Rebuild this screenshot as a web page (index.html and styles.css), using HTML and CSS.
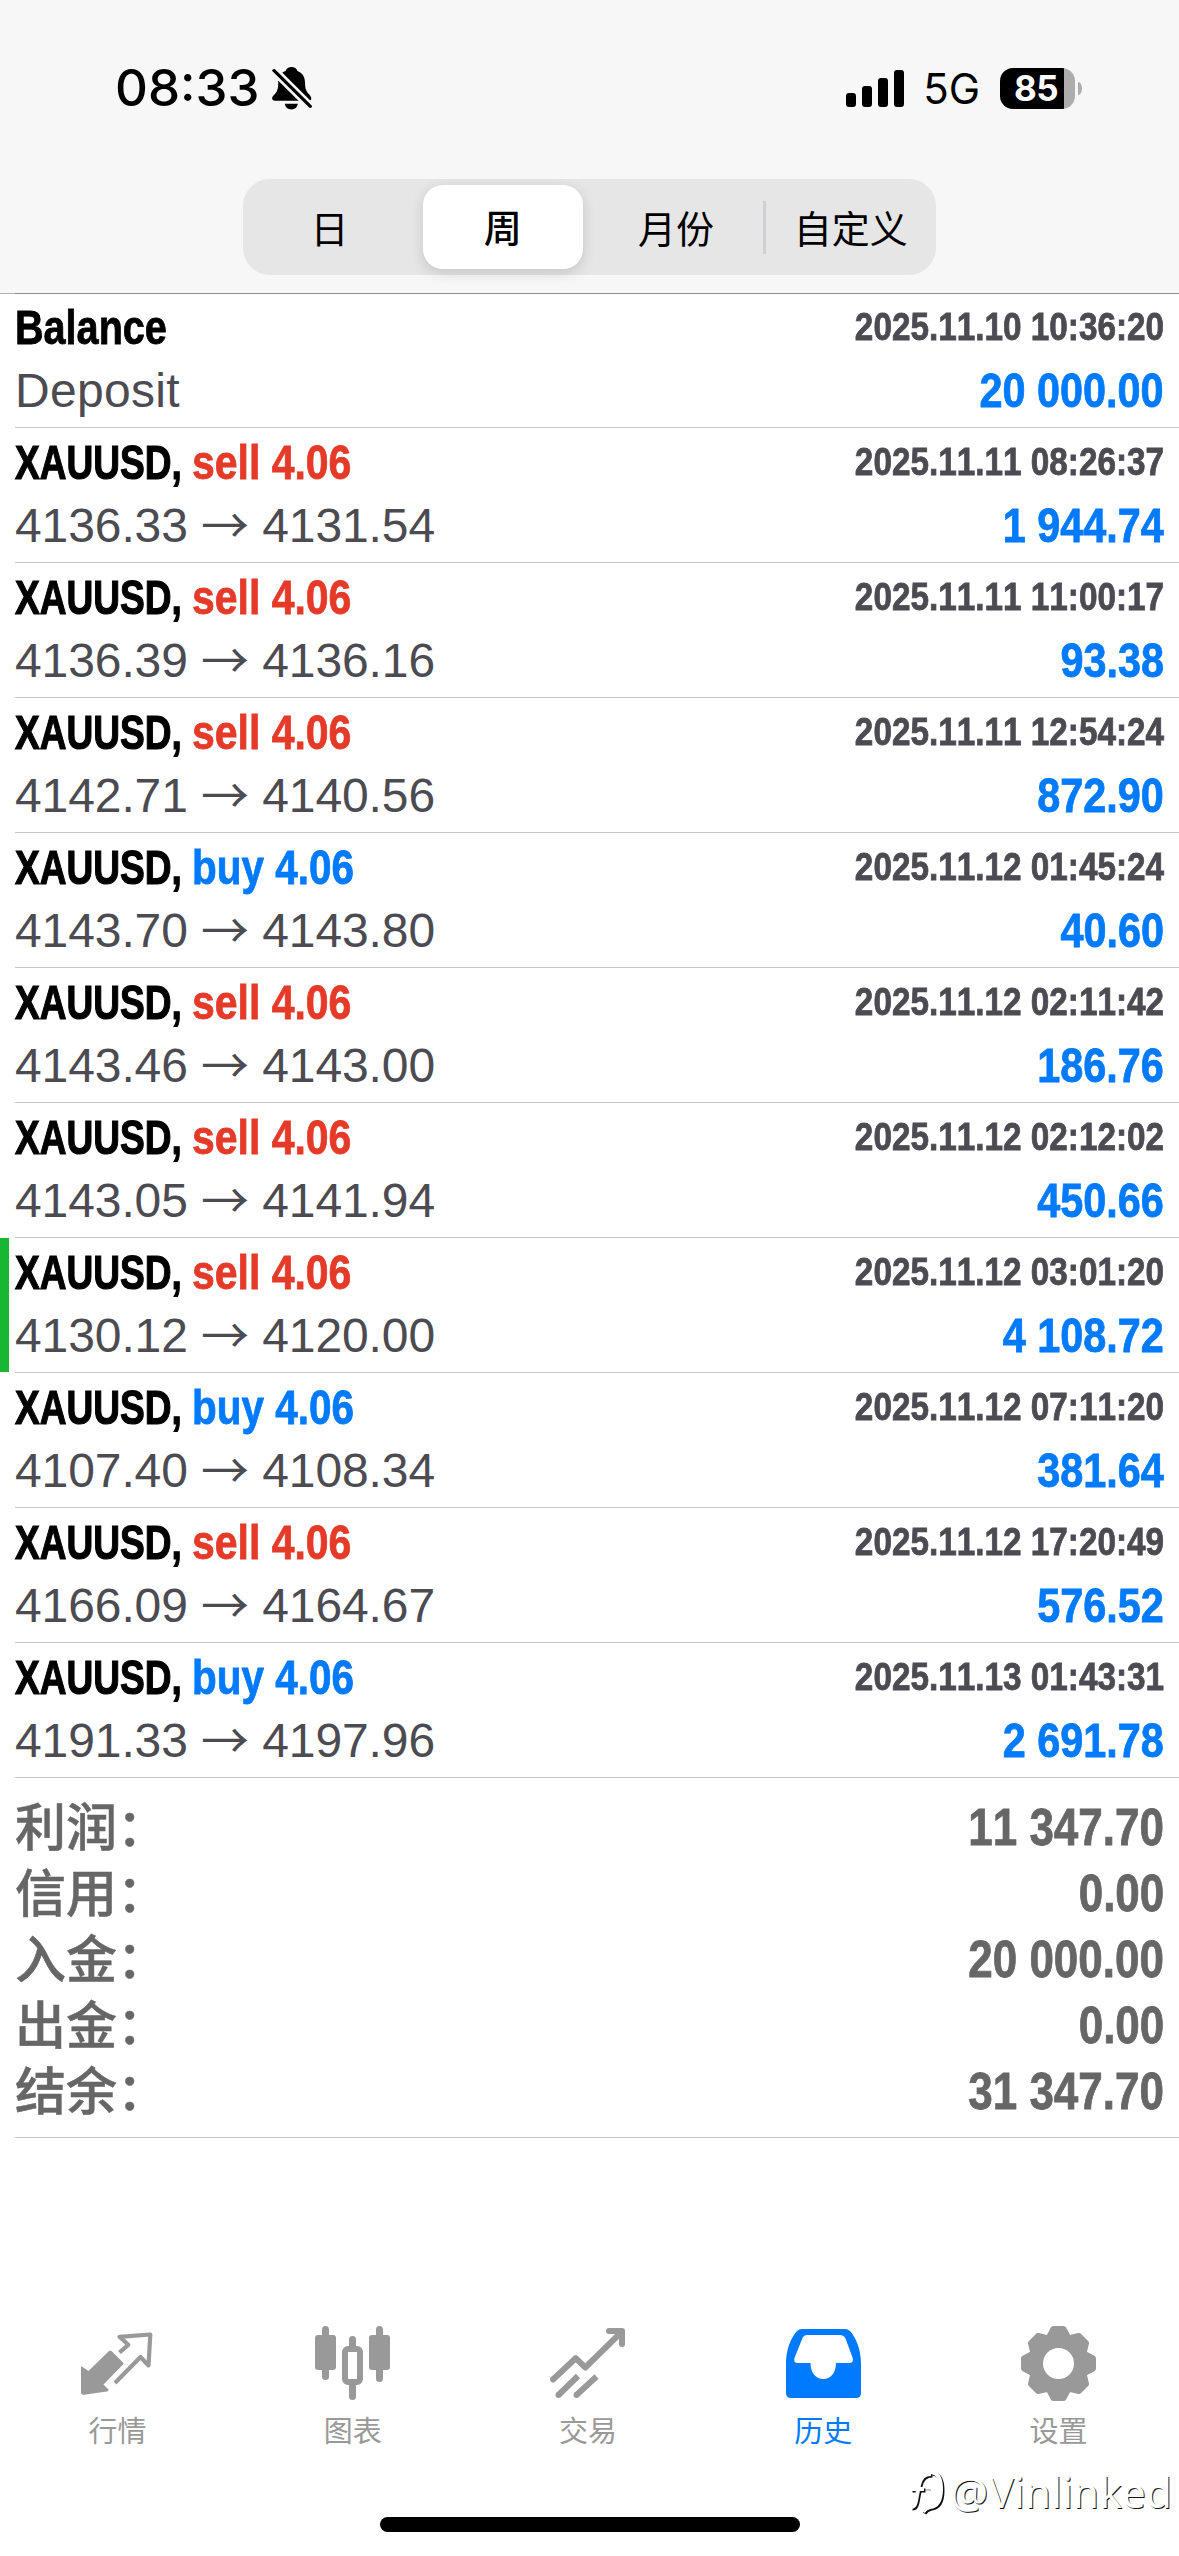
FILE: index.html
```html
<!DOCTYPE html>
<html lang="zh-CN">
<head>
<meta charset="utf-8">
<title>历史</title>
<link rel="stylesheet" href="styles.css">
</head>
<body>
<div class="screen">
  <header class="header">
    <div class="status">
      <div class="status-left">
        <span class="time">08:33</span>
        <svg class="bell" width="40" height="43" viewBox="0 0 40 49" preserveAspectRatio="none">
          <path d="M19.500 0C22.500 0 24.500 1.500 25.500 4.500C31 7 33 12 33 18C33.200 25 34 28 37.500 31.500C40 34.500 40 38.500 36.500 38.500H3C-.5 38.500-.8 34.500 2 31.800C5.500 28 6.200 25 6.200 18C6.200 11 8.500 6.500 13.500 4.500C14.500 1.500 16.500 0 19.500 0Z"/>
          <path d="M12.800 42H25.800C25 46.500 23 48.300 19.300 48.300S13.600 46.500 12.800 42Z"/>
          <path class="bell-gap" d="M-1 .5L41 48"/>
          <path class="bell-slash" d="M2 4L38.200 44.800"/>
        </svg>
      </div>
      <div class="status-right">
        <svg class="signal" width="58" height="37" viewBox="0 0 58 37">
          <rect x="0" y="23" width="10" height="14" rx="3"/>
          <rect x="16" y="16" width="10" height="21" rx="3"/>
          <rect x="32" y="8" width="10" height="29" rx="3"/>
          <rect x="48" y="0" width="10" height="37" rx="3"/>
        </svg>
        <span class="network">5G</span>
        <div class="battery"><span class="battery-level">85</span></div>
        <span class="battery-cap"></span>
      </div>
    </div>
    <nav class="segments">
      <span class="segment">日</span>
      <span class="segment selected">周</span>
      <span class="segment">月份</span>
      <span class="segment divided">自定义</span>
    </nav>
  </header>

  <main class="deals">
    <div class="deal">
      <div class="line"><span class="title">Balance</span><span class="date">2025.11.10 10:36:20</span></div>
      <div class="line"><span class="price comment">Deposit</span><span class="profit">20 000.00</span></div>
    </div>
    <div class="deal">
      <div class="line"><span class="symbol">XAUUSD,</span><span class="side sell">sell 4.06</span><span class="date">2025.11.11 08:26:37</span></div>
      <div class="line"><span class="price">4136.33 <i class="arrow">→</i> 4131.54</span><span class="profit">1 944.74</span></div>
    </div>
    <div class="deal">
      <div class="line"><span class="symbol">XAUUSD,</span><span class="side sell">sell 4.06</span><span class="date">2025.11.11 11:00:17</span></div>
      <div class="line"><span class="price">4136.39 <i class="arrow">→</i> 4136.16</span><span class="profit">93.38</span></div>
    </div>
    <div class="deal">
      <div class="line"><span class="symbol">XAUUSD,</span><span class="side sell">sell 4.06</span><span class="date">2025.11.11 12:54:24</span></div>
      <div class="line"><span class="price">4142.71 <i class="arrow">→</i> 4140.56</span><span class="profit">872.90</span></div>
    </div>
    <div class="deal">
      <div class="line"><span class="symbol">XAUUSD,</span><span class="side buy">buy 4.06</span><span class="date">2025.11.12 01:45:24</span></div>
      <div class="line"><span class="price">4143.70 <i class="arrow">→</i> 4143.80</span><span class="profit">40.60</span></div>
    </div>
    <div class="deal">
      <div class="line"><span class="symbol">XAUUSD,</span><span class="side sell">sell 4.06</span><span class="date">2025.11.12 02:11:42</span></div>
      <div class="line"><span class="price">4143.46 <i class="arrow">→</i> 4143.00</span><span class="profit">186.76</span></div>
    </div>
    <div class="deal">
      <div class="line"><span class="symbol">XAUUSD,</span><span class="side sell">sell 4.06</span><span class="date">2025.11.12 02:12:02</span></div>
      <div class="line"><span class="price">4143.05 <i class="arrow">→</i> 4141.94</span><span class="profit">450.66</span></div>
    </div>
    <div class="deal take-profit">
      <div class="line"><span class="symbol">XAUUSD,</span><span class="side sell">sell 4.06</span><span class="date">2025.11.12 03:01:20</span></div>
      <div class="line"><span class="price">4130.12 <i class="arrow">→</i> 4120.00</span><span class="profit">4 108.72</span></div>
    </div>
    <div class="deal">
      <div class="line"><span class="symbol">XAUUSD,</span><span class="side buy">buy 4.06</span><span class="date">2025.11.12 07:11:20</span></div>
      <div class="line"><span class="price">4107.40 <i class="arrow">→</i> 4108.34</span><span class="profit">381.64</span></div>
    </div>
    <div class="deal">
      <div class="line"><span class="symbol">XAUUSD,</span><span class="side sell">sell 4.06</span><span class="date">2025.11.12 17:20:49</span></div>
      <div class="line"><span class="price">4166.09 <i class="arrow">→</i> 4164.67</span><span class="profit">576.52</span></div>
    </div>
    <div class="deal">
      <div class="line"><span class="symbol">XAUUSD,</span><span class="side buy">buy 4.06</span><span class="date">2025.11.13 01:43:31</span></div>
      <div class="line"><span class="price">4191.33 <i class="arrow">→</i> 4197.96</span><span class="profit">2 691.78</span></div>
    </div>
    <section class="summary">
      <div class="total"><span class="total-label">利润：</span><span class="total-value">11 347.70</span></div>
      <div class="total"><span class="total-label">信用：</span><span class="total-value">0.00</span></div>
      <div class="total"><span class="total-label">入金：</span><span class="total-value">20 000.00</span></div>
      <div class="total"><span class="total-label">出金：</span><span class="total-value">0.00</span></div>
      <div class="total"><span class="total-label">结余：</span><span class="total-value">31 347.70</span></div>
    </section>
  </main>

  <footer class="tabs">
    <a class="tab">
      <span class="tab-icon"><svg width="75" height="75" viewBox="0 0 75 75">
        <g transform="translate(1 6)">
          <path d="M.8 34.500L7.500 39L28 19Q29.200 18 30.400 19L42 30.500Q43 31.500 42 32.600L22.500 52.500L27.500 57.500Q28 59 26 59.500L3 62.800Q0 63 0 60V35Q0 34 .8 34.500Z" fill="currentColor"/>
          <path d="M38.500 20.500L47.300 12.800L38.500 4.800L69.300 2.500L67.500 33.500L59.500 25L34 51" fill="none" stroke="currentColor" stroke-width="4.200" stroke-linejoin="round"/>
        </g>
      </svg></span>
      <span class="tab-label">行情</span>
    </a>
    <a class="tab">
      <span class="tab-icon"><svg width="75" height="75" viewBox="0 0 75 75" fill="currentColor">
        <rect x="7" y="0" width="7" height="54" rx="3.500"/>
        <rect x="0" y="9" width="21" height="35" rx="3"/>
        <rect x="61" y="0" width="7" height="56" rx="3.500"/>
        <rect x="54" y="9" width="21" height="35" rx="3"/>
        <rect x="34" y="10" width="7" height="14" rx="3.500"/>
        <rect x="34" y="56" width="7" height="18" rx="3.500"/>
        <rect x="30" y="23" width="15" height="33" rx="3" fill="none" stroke="currentColor" stroke-width="6"/>
      </svg></span>
      <span class="tab-label">图表</span>
    </a>
    <a class="tab">
      <span class="tab-icon"><svg width="75" height="75" viewBox="0 0 75 75">
        <g transform="translate(0 2)" fill="none" stroke="currentColor" stroke-width="6" stroke-linejoin="round">
          <path d="M3 51.500L25.700 30.200L35.300 39.500L71.500 4" stroke-linecap="round"/>
          <path d="M59 3H72V16" stroke-linecap="round"/>
          <path d="M8.500 67L28 48M26.500 67L46.500 48.500"/>
          <path d="M8.500 67h.01M26.500 67h.01" stroke-linecap="round"/>
        </g>
      </svg></span>
      <span class="tab-label">交易</span>
    </a>
    <a class="tab active">
      <span class="tab-icon"><svg width="75" height="75" viewBox="0 0 75 75" fill="currentColor">
        <path transform="translate(0 3)" fill-rule="evenodd" d="M0 64V35C0 20 5 9 11 2Q13 0 16 0H59Q62 0 64 2C70 9 75 20 75 35V64Q75 69 70 69H5Q0 69 0 64ZM21 6Q18 6 16.500 9L8.500 29Q7 34 12 34H24.500C24.500 44 30 50 37.300 50S50 44 50 34H63Q68 34 66.700 29L59.500 9.500Q58 6 54 6Z"/>
      </svg></span>
      <span class="tab-label">历史</span>
    </a>
    <a class="tab">
      <span class="tab-icon"><svg width="75" height="75" viewBox="0 0 75 75">
        <defs><mask id="hub"><rect width="75" height="75" fill="#fff"/><circle cx="37.500" cy="37.500" r="15.500" fill="#000"/></mask></defs>
        <path mask="url(#hub)" fill="currentColor" stroke="currentColor" stroke-width="6" stroke-linejoin="round" d="M32.500 3H42.500L47.500 12.500L58 10L65 17L62.500 27.500L72 32.500V42.500L62.500 47.500L65 58L58 65L47.500 62.500L42.500 72H32.500L27.500 62.500L17 65L10 58L12.500 47.500L3 42.500V32.500L12.500 27.500L10 17L17 10L27.500 12.500Z"/>
      </svg></span>
      <span class="tab-label">设置</span>
    </a>
  </footer>
  <div class="home-indicator"></div>
  <div class="watermark">
    <svg width="36" height="48" viewBox="0 0 36 48" fill="none">
      <g stroke="#111" transform="translate(1.500 1.500)" stroke-width="4"><path d="M1 37Q5 37 6 31L9 15Q11 4 21 4M1 19H14"/><path d="M21 2Q31 3 31 19Q31 36 20 37Q15 38 13 42"/></g>
      <g stroke="#fff" stroke-width="4"><path d="M1 37Q5 37 6 31L9 15Q11 4 21 4M1 19H14"/><path d="M21 2Q31 3 31 19Q31 36 20 37Q15 38 13 42"/></g>
      <path d="M16 20H21" stroke="#888"/>
    </svg>
    <span>@Vinlinked</span>
  </div>
</div>
</body>
</html>
```
FILE: styles.css
```css
* { box-sizing: border-box; }

body {
  margin: 0;
  background: #fff;
  font-family: "Liberation Sans", "Noto Sans CJK SC", sans-serif;
}

.screen {
  position: relative;
  display: flex;
  flex-direction: column;
  width: 1179px;
  height: 2556px;
  overflow: hidden;
  background: #fff;
}

.header {
  height: 294px;
  flex: none;
  display: flex;
  flex-direction: column;
  align-items: center;
  background: #f7f7f7;
  border-bottom: 1px solid #b2b2b2;
}

.status {
  width: 100%;
  height: 179px;
  flex: none;
  display: flex;
  justify-content: space-between;
  align-items: flex-start;
  padding: 58px 97px 0 115px;
  color: #000;
  font-family: Inter, sans-serif;
}

.status-left, .status-right { display: flex; align-items: center; height: 60px; }
.time { width: 145px; font-size: 51px; line-height: 60px; font-weight: 500; }
.bell { margin-left: 12px; }
.bell-gap { stroke: #f7f7f7; stroke-width: 9; }
.bell-slash { stroke: #000; stroke-width: 3.400; stroke-linecap: round; }
.network { font-size: 42px; line-height: 60px; margin: 2px 0 0 19px; }

.battery {
  width: 75px;
  height: 41px;
  margin-left: 20px;
  border-radius: 13px;
  background: linear-gradient(90deg, #000 64px, #adadad 64px);
  display: flex;
  padding-left: 14px;
}
.battery-level {
  color: #fff;
  font-size: 35px;
  font-weight: 700;
  line-height: 41px;
  letter-spacing: -.5px;
}
.battery-cap {
  width: 4px;
  height: 13px;
  margin-left: 3px;
  background: #adadad;
  border-radius: 0 4px 4px 0 / 0 7px 7px 0;
}

.segments {
  width: 693px;
  height: 96px;
  flex: none;
  display: grid;
  grid-template-columns: repeat(4, 1fr);
  align-items: center;
  border-radius: 27px;
  background: #e6e6e7;
  color: #000;
  font: 400 38px/51px "Noto Sans CJK SC", sans-serif;
}
.segment { height: 53px; text-align: center; }
.segment.selected {
  height: 84px;
  margin: 0 7px;
  line-height: 82px;
  font-weight: 500;
  border-radius: 20px;
  background: #fff;
  box-shadow: 0 4px 14px rgba(0, 0, 0, .14);
}
.segment.divided { border-left: 3px solid #d0d0d2; }

.deals { display: flex; flex-direction: column; }

.deal {
  height: 135px;
  margin-left: 15px;
  padding: 3px 15px 0 0;
  border-bottom: 1px solid #c6c6c8;
}
.deal:first-child {
  height: 134px;
  padding-top: 2px;
  box-shadow: 0 -1px #8e8e8f;
}
.deal.take-profit { position: relative; }
.deal.take-profit::before {
  content: "";
  position: absolute;
  left: -15px;
  top: 0;
  width: 9px;
  height: 134px;
  background: #17b633;
}

.line {
  display: flex;
  height: 63px;
  line-height: 63px;
  white-space: nowrap;
}

/* condensed bold face */
.title, .symbol, .side, .date, .profit, .total-value {
  font-weight: 700;
  font-kerning: none;
  -webkit-text-stroke: .8px currentColor;
}
.title, .symbol, .side { font-size: 48px; transform-origin: 0 50%; }
.title { transform: scaleX(.825); }
.symbol { width: 177px; transform: scaleX(.772); -webkit-text-stroke-width: 1.2px; }
.side { width: 160px; transform: scaleX(.853); }
.side.buy { transform: scaleX(.843); }
.sell { color: #e63a29; }
.buy { color: #007aff; }
.date, .profit, .total-value {
  margin-left: auto;
  transform: scaleX(.862);
  transform-origin: 100% 50%;
}
.date { font-size: 39px; line-height: 61px; color: #4c4b52; transform: scaleX(.854); }
.profit { font-size: 48px; color: #007aff; }
.price { font-size: 48px; letter-spacing: -.1px; color: #4c4b52; font-kerning: none; }
.price.comment { letter-spacing: .3px; }
.arrow {
  font-family: "Noto Sans CJK SC", sans-serif;
  font-style: normal;
  line-height: 0;
  vertical-align: -1px;
}

.summary {
  height: 360px;
  margin-left: 15px;
  padding: 15px 15px 0 0;
  border-bottom: 1px solid #c6c6c8;
  color: #666;
}
.total { display: flex; height: 66px; }
.total-label { font: 500 51px/62px "Noto Sans CJK SC", sans-serif; -webkit-text-stroke: .5px currentColor; }
.total-value { font-size: 51px; line-height: 69px; }

.tabs {
  display: grid;
  grid-template-columns: repeat(5, 1fr);
  margin-top: 188px;
  padding-right: 3px;
  color: #999;
}
.tab { display: flex; flex-direction: column; align-items: center; }
.tab-icon { width: 75px; height: 75px; }
.tab-icon svg { display: block; }
.tab-label { margin-top: 6px; font: 400 29px/44px "Noto Sans CJK SC", sans-serif; }
.tab.active { color: #007aff; }

.home-indicator {
  width: 420px;
  height: 15px;
  margin: 66px auto 0;
  border-radius: 8px;
  background: #000;
}

/* laid over the tab bar's corner */
.watermark {
  position: absolute;
  left: 910px;
  top: 2470px;
  display: flex;
  align-items: flex-start;
  gap: 4px;
  color: #fff;
  font: 400 42.500px/44px "Noto Sans", sans-serif;
  text-shadow: 1px 1px 0 #111;
}
```
